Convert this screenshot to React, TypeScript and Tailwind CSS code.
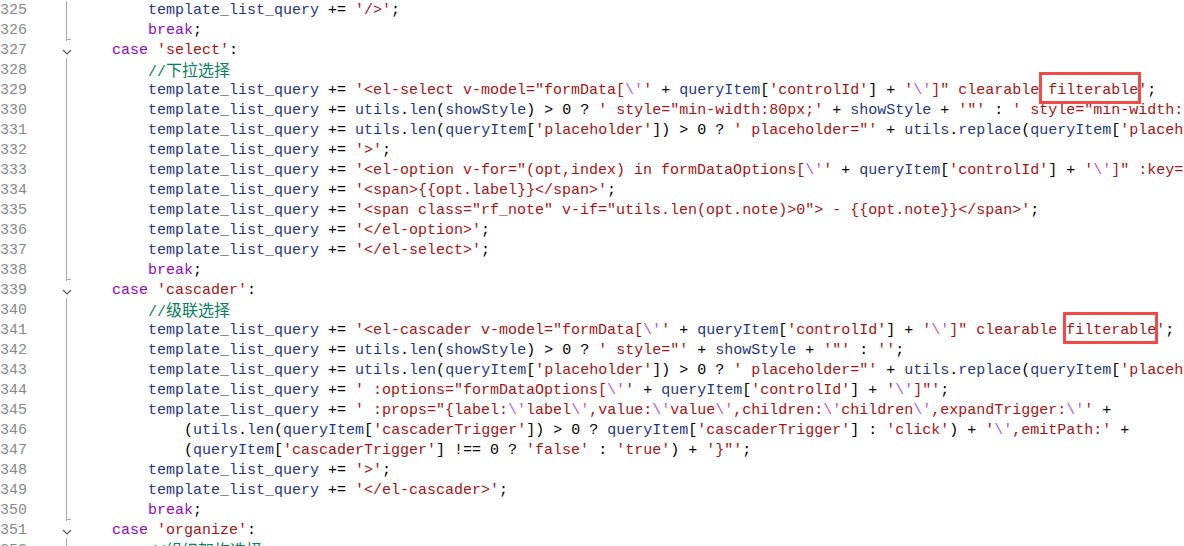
import React from 'react';

type Kind = 'id' | 'str' | 'esc' | 'kw' | 'cm' | 'p';
type Tok = { t: string; k: Kind };

const COLORS: Record<Kind, string> = {
  id: 'text-[#1f377f]',
  str: 'text-[#a31515]',
  esc: 'text-[#b55ae0]',
  kw: 'text-[#8f08c4]',
  cm: 'text-[#0a7d5c]',
  p: 'text-black',
};

const KEYWORDS = ['case', 'break'];

const LINES: string[] = [
  `        template_list_query += '/>';`,
  `        break;`,
  `    case 'select':`,
  `        //下拉选择`,
  `        template_list_query += '<el-select v-model="formData[\\'' + queryItem['controlId'] + '\\']" clearable filterable';`,
  `        template_list_query += utils.len(showStyle) > 0 ? ' style="min-width:80px;' + showStyle + '"' : ' style="min-width:80px;"';`,
  `        template_list_query += utils.len(queryItem['placeholder']) > 0 ? ' placeholder="' + utils.replace(queryItem['placeholder'], '"', '') + '"' : '';`,
  `        template_list_query += '>';`,
  `        template_list_query += '<el-option v-for="(opt,index) in formDataOptions[\\'' + queryItem['controlId'] + '\\']" :key="opt.value" :label="opt.label" :value="opt.value">';`,
  `        template_list_query += '<span>{{opt.label}}</span>';`,
  `        template_list_query += '<span class="rf_note" v-if="utils.len(opt.note)>0"> - {{opt.note}}</span>';`,
  `        template_list_query += '</el-option>';`,
  `        template_list_query += '</el-select>';`,
  `        break;`,
  `    case 'cascader':`,
  `        //级联选择`,
  `        template_list_query += '<el-cascader v-model="formData[\\'' + queryItem['controlId'] + '\\']" clearable filterable';`,
  `        template_list_query += utils.len(showStyle) > 0 ? ' style="' + showStyle + '"' : '';`,
  `        template_list_query += utils.len(queryItem['placeholder']) > 0 ? ' placeholder="' + utils.replace(queryItem['placeholder'], '"', '') + '"' : '';`,
  `        template_list_query += ' :options="formDataOptions[\\'' + queryItem['controlId'] + '\\']"';`,
  `        template_list_query += ' :props="{label:\\'label\\',value:\\'value\\',children:\\'children\\',expandTrigger:\\'' +`,
  `            (utils.len(queryItem['cascaderTrigger']) > 0 ? queryItem['cascaderTrigger'] : 'click') + '\\',emitPath:' +`,
  `            (queryItem['cascaderTrigger'] !== 0 ? 'false' : 'true') + '}"';`,
  `        template_list_query += '>';`,
  `        template_list_query += '</el-cascader>';`,
  `        break;`,
  `    case 'organize':`,
  `        //组织架构选择`,
];

// fold starts get a chevron, the row before gets the little end tick
const FOLD_START = [2, 14, 26];
const FOLD_END = [1, 13, 25];

function tokenize(line: string): Tok[] {
  const out: Tok[] = [];
  let i = 0;
  let punct = '';
  const flush = () => {
    if (punct) out.push({ t: punct, k: 'p' });
    punct = '';
  };
  while (i < line.length) {
    const ch = line[i];
    if (line.startsWith('//', i)) {
      flush();
      out.push({ t: line.slice(i), k: 'cm' });
      break;
    }
    if (ch === "'") {
      flush();
      let buf = "'";
      let j = i + 1;
      while (j < line.length) {
        if (line[j] === '\\') {
          if (buf) out.push({ t: buf, k: 'str' });
          buf = '';
          out.push({ t: line.slice(j, j + 2), k: 'esc' });
          j += 2;
          continue;
        }
        buf += line[j];
        j++;
        if (line[j - 1] === "'") break;
      }
      if (buf) out.push({ t: buf, k: 'str' });
      i = j;
      continue;
    }
    const m = /^[A-Za-z_]\w*/.exec(line.slice(i));
    if (m) {
      flush();
      out.push({ t: m[0], k: KEYWORDS.includes(m[0]) ? 'kw' : 'id' });
      i += m[0].length;
      continue;
    }
    punct += ch;
    i++;
  }
  flush();
  return out;
}

const Comment = ({ text }: { text: string }) => {
  const parts = text.split(/([\u4e00-\u9fff]+)/);
  return (
    <span className={COLORS.cm}>
      {parts.map((p, i) =>
        /[\u4e00-\u9fff]/.test(p) ? (
          <span key={i} className="text-[16px] [font-family:'Noto_Sans_CJK_SC',sans-serif]">
            {p}
          </span>
        ) : (
          <span key={i}>{p}</span>
        )
      )}
    </span>
  );
};

const Gutter = ({ idx }: { idx: number }) => {
  if (FOLD_START.includes(idx)) {
    return (
      <div className="relative w-[18px] h-full shrink-0">
        <svg className="absolute left-[4px] top-[8px]" width="10" height="6" viewBox="0 0 10 6">
          <polyline points="1,1 5,5 9,1" fill="none" stroke="#5a5a5a" strokeWidth="1.2" />
        </svg>
        <div className="absolute left-[8px] top-[17px] bottom-0 w-px bg-[#a8a8a8]" />
      </div>
    );
  }
  return (
    <div className="relative w-[18px] h-full shrink-0">
      <div className="absolute left-[8px] top-0 bottom-0 w-px bg-[#a8a8a8]" />
      {FOLD_END.includes(idx) && <div className="absolute left-[8px] bottom-[1px] w-[5px] h-px bg-[#a8a8a8]" />}
    </div>
  );
};

export default function App() {
  return (
    <div className="relative w-[1184px] h-[546px] overflow-hidden bg-white pt-[1px] [font-family:'Liberation_Mono','Noto_Sans_CJK_SC',monospace] text-[15px]">
      {LINES.map((line, idx) => (
        <div key={idx} className="flex h-[20px] items-center leading-[20px]">
          <div className="w-[58px] shrink-0 text-[#8a8a8a]">{325 + idx}</div>
          <Gutter idx={idx} />
          <div className="whitespace-pre">
            {tokenize(line).map((tok, i) =>
              tok.k === 'cm' ? (
                <Comment key={i} text={tok.t} />
              ) : (
                <span key={i} className={COLORS[tok.k]}>
                  {tok.t}
                </span>
              )
            )}
          </div>
        </div>
      ))}

      {/* annotation boxes around "filterable" */}
      <div className="absolute left-[1039px] top-[72px] w-[102px] h-[32px] border-[3px] border-[#ef4b4b]" />
      <div className="absolute left-[1063px] top-[312px] w-[95px] h-[32px] border-[3px] border-[#ef4b4b]" />
    </div>
  );
}
